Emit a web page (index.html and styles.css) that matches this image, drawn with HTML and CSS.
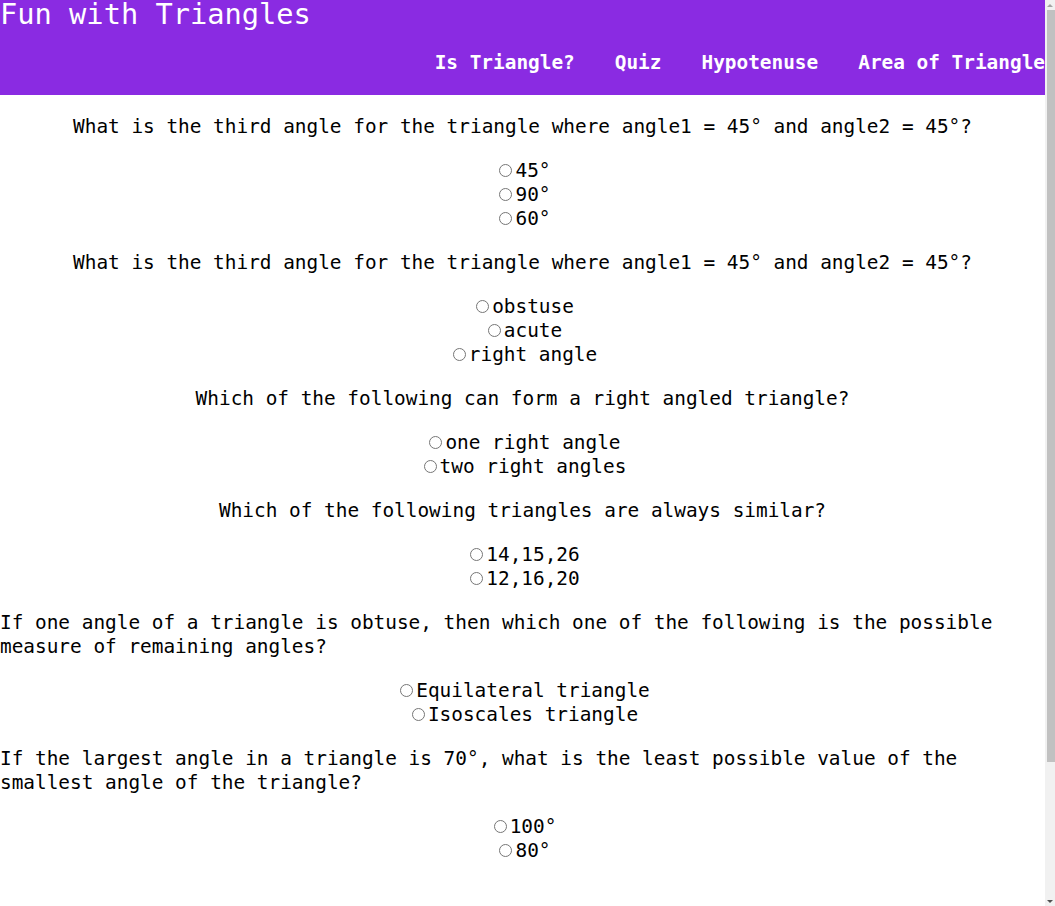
FILE: index.html
```html
<!DOCTYPE html>
<html lang="en">
<head>
<meta charset="utf-8">
<title>Fun with Triangles</title>
<link rel="stylesheet" href="styles.css">
</head>
<body>
<header class="site-header">
  <h1 class="site-title">Fun with Triangles</h1>
  <nav class="site-nav">
    <a class="nav-link" href="#">Is Triangle?</a>
    <a class="nav-link" href="#">Quiz</a>
    <a class="nav-link" href="#">Hypotenuse</a>
    <a class="nav-link" href="#">Area of Triangle</a>
  </nav>
</header>
<main class="quiz">
  <p class="question">What is the third angle for the triangle where angle1 = 45° and angle2 = 45°?</p>
  <div class="answers">
    <div class="answer"><input type="radio" name="q1" id="q1a"><label for="q1a">45°</label></div>
    <div class="answer"><input type="radio" name="q1" id="q1b"><label for="q1b">90°</label></div>
    <div class="answer"><input type="radio" name="q1" id="q1c"><label for="q1c">60°</label></div>
  </div>

  <p class="question">What is the third angle for the triangle where angle1 = 45° and angle2 = 45°?</p>
  <div class="answers">
    <div class="answer"><input type="radio" name="q2" id="q2a"><label for="q2a">obstuse</label></div>
    <div class="answer"><input type="radio" name="q2" id="q2b"><label for="q2b">acute</label></div>
    <div class="answer"><input type="radio" name="q2" id="q2c"><label for="q2c">right angle</label></div>
  </div>

  <p class="question">Which of the following can form a right angled triangle?</p>
  <div class="answers">
    <div class="answer"><input type="radio" name="q3" id="q3a"><label for="q3a">one right angle</label></div>
    <div class="answer"><input type="radio" name="q3" id="q3b"><label for="q3b">two right angles</label></div>
  </div>

  <p class="question">Which of the following triangles are always similar?</p>
  <div class="answers">
    <div class="answer"><input type="radio" name="q4" id="q4a"><label for="q4a">14,15,26</label></div>
    <div class="answer"><input type="radio" name="q4" id="q4b"><label for="q4b">12,16,20</label></div>
  </div>

  <p class="question">If one angle of a triangle is obtuse, then which one of the following is the possible measure of remaining angles?</p>
  <div class="answers">
    <div class="answer"><input type="radio" name="q5" id="q5a"><label for="q5a">Equilateral triangle</label></div>
    <div class="answer"><input type="radio" name="q5" id="q5b"><label for="q5b">Isoscales triangle</label></div>
  </div>

  <p class="question">If the largest angle in a triangle is 70°, what is the least possible value of the smallest angle of the triangle?</p>
  <div class="answers">
    <div class="answer"><input type="radio" name="q6" id="q6a"><label for="q6a">100°</label></div>
    <div class="answer"><input type="radio" name="q6" id="q6b"><label for="q6b">80°</label></div>
  </div>
</main>
<div class="scrollbar" aria-hidden="true">
  <div class="scroll-arrow up"></div>
  <div class="scroll-track"><div class="scroll-thumb"></div></div>
  <div class="scroll-arrow down"></div>
</div>
</body>
</html>
```
FILE: styles.css
```css
body {
  margin: 0 10px 0 0;
  font-family: "DejaVu Sans Mono", "Liberation Mono", monospace;
  color: #000;
  background: #fff;
}

.site-header {
  height: 95px;
  background: #8a2be2;
  color: #fff;
  display: flex;
  flex-direction: column;
}

.site-title {
  margin: 0;
  font-size: 28.7px;
  line-height: 1;
  font-weight: normal;
}

.site-nav {
  margin-top: 22px;
  display: flex;
  justify-content: flex-end;
  gap: 40px;
}

.nav-link {
  color: #fff;
  text-decoration: none;
  font-weight: bold;
  font-size: 19.4px;
}

.quiz {
  display: flex;
  flex-direction: column;
  align-items: center;
  gap: 20px;
  padding: 20px 0 212px;
  font-size: 19.4px;
  line-height: 24px;
}

.question {
  margin: 0;
}

.answers {
  display: flex;
  flex-direction: column;
  align-items: center;
}

.answer input {
  margin: 3px 3px 0 5px;
}

/* window scrollbar chrome */
.scrollbar {
  position: fixed;
  top: 0;
  right: 0;
  width: 10px;
  height: 100vh;
  background: #f1f1f1;
  display: flex;
  flex-direction: column;
}

.scroll-arrow {
  height: 10px;
  display: flex;
  align-items: center;
  justify-content: center;
}

.scroll-arrow::before {
  content: "";
  border-left: 3px solid transparent;
  border-right: 3px solid transparent;
}

.scroll-arrow.up::before {
  border-bottom: 3px solid #a3a3a3;
}

.scroll-arrow.down::before {
  border-top: 3px solid #505050;
}

.scroll-track {
  flex: 1;
  display: flex;
  flex-direction: column;
}

.scroll-thumb {
  height: 752px;
  margin-left: 2px;
  background: #c1c1c1;
}
```
